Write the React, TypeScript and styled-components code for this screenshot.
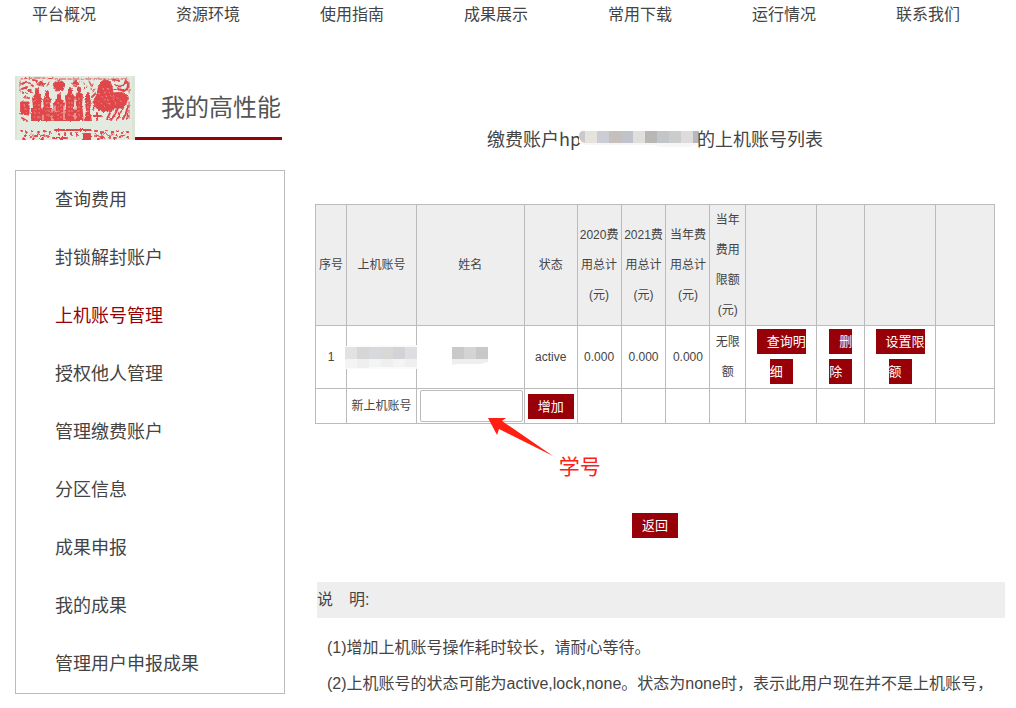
import React from "react";
import styled, { createGlobalStyle } from "styled-components";

const RED = "#970009";
const LINE = "#bbbbbb";
const SANS = '"Liberation Sans", "Noto Sans CJK SC", sans-serif';
const CJK = '"Noto Sans CJK SC", sans-serif';

const GlobalStyle = createGlobalStyle`
  * { box-sizing: border-box; }
  body {
    margin: 0;
    background: #fff;
    color: #444;
    font-family: ${SANS};
    font-size: 16px;
  }
`;

const TopNav = styled.nav`
  display: flex;
  justify-content: space-between;
  padding: 0 56px 0 32px;
  height: 30px;
  line-height: 30px;
`;

const NavLink = styled.a`
  color: #444;
  text-decoration: none;
`;

const Page = styled.div`
  display: flex;
  align-items: flex-start;
  padding: 46px 11px 0 15px;
`;

const Sidebar = styled.aside`
  flex: 0 0 270px;
  margin-right: 30px;
`;

const Brand = styled.header`
  display: flex;
  width: 267px;
  height: 64px;
  margin-bottom: 30px;
`;

const BrandTitle = styled.h1`
  flex: 1;
  margin: 0;
  border-bottom: 3px solid ${RED};
  padding-left: 26px;
  font-size: 24px;
  line-height: 64px;
  font-weight: 400;
  color: #555;
  white-space: nowrap;
`;

const Menu = styled.ul`
  margin: 0;
  padding: 0;
  list-style: none;
  border: 1px solid ${LINE};
`;

const MenuLink = styled.a<{ $active?: boolean }>`
  display: block;
  padding-left: 39px;
  font-size: 18px;
  line-height: 58px;
  text-decoration: none;
  color: ${(p) => (p.$active ? RED : "#444")};
`;

const Main = styled.main`
  flex: 1;
  min-width: 0;
`;

const Panel = styled.section`
  padding: 44px 10px 0 0;
  text-align: center;
`;

const PanelTitle = styled.h2`
  display: flex;
  justify-content: center;
  margin: 0 0 48px;
  font-family: ${CJK};
  font-size: 18px;
  line-height: 36px;
  font-weight: 400;
`;

const TitleMask = styled.svg`
  flex: none;
  align-self: center;
  margin-left: -2px;
  margin-right: -3px;
`;

const Table = styled.table`
  width: 100%;
  table-layout: fixed;
  border-collapse: collapse;
  font-size: 12px;
  line-height: 30px;
`;

const HeadCell = styled.th`
  padding: 0 2px;
  border: 1px solid ${LINE};
  background: #eee;
  font-weight: 400;
`;

const Cell = styled.td`
  padding: 1px 2px;
  border: 1px solid ${LINE};
`;

const FormCell = styled.td`
  height: 35px;
  padding: 0;
  border: 1px solid ${LINE};
  line-height: 32px;
`;

const CellMask = styled.svg`
  display: block;
  margin: 0 -4px;
`;

const NameMask = styled.svg`
  display: block;
  margin: 0 auto;
`;

const InputWrap = styled.div`
  position: relative;
  padding: 0 1px 0 3px;
`;

const AccountInput = styled.input`
  display: block;
  width: 100%;
  height: 32px;
  border: 1px solid ${LINE};
  border-radius: 2px;
  background: #fff;
  padding: 0 6px;
`;

const ActionLink = styled.a`
  padding: 5px 10px;
  background: ${RED};
  color: #fff;
  font-size: 13px;
  text-decoration: none;
`;

const Button = styled.button`
  height: 25px;
  padding: 0 10px;
  border: 0;
  background: ${RED};
  color: #fff;
  font-family: ${SANS};
  font-size: 13px;
  line-height: 25px;
  vertical-align: middle;
`;

const BackRow = styled.div`
  padding-top: 89px;
  display: flex;
  justify-content: center;
`;

/* Callout that points at the account field from below. */
const Annotation = styled.div`
  position: absolute;
  top: 28px;
  left: 70px;
  display: flex;
  color: #ff2013;
  font-size: 21px;
  line-height: 30px;
  white-space: nowrap;
  pointer-events: none;
`;

const AnnotationText = styled.span`
  margin-top: 34px;
  margin-left: 5px;
`;

const Notes = styled.section`
  margin-top: 44px;
  padding-left: 2px;
  line-height: 36px;
  overflow: hidden;
`;

const NotesTitle = styled.h3`
  margin: 0 0 12px;
  background: #eee;
  font-size: 16px;
  font-weight: 400;
  white-space: pre;
`;

const Note = styled.p`
  margin: 0;
  padding-left: 10px;
  white-space: nowrap;
`;

const navItems = ["平台概况", "资源环境", "使用指南", "成果展示", "常用下载", "运行情况", "联系我们"];

const menuItems = [
  "查询费用",
  "封锁解封账户",
  "上机账号管理",
  "授权他人管理",
  "管理缴费账户",
  "分区信息",
  "成果申报",
  "我的成果",
  "管理用户申报成果",
];

const columns = [
  { label: "序号", width: 31 },
  { label: "上机账号", width: 70 },
  { label: "姓名", width: 108 },
  { label: "状态", width: 53 },
  { label: "2020费用总计(元)", width: 44 },
  { label: "2021费用总计(元)", width: 45 },
  { label: "当年费用总计(元)", width: 44 },
  { label: "当年费用限额(元)", width: 36 },
  { label: "", width: 71 },
  { label: "", width: 48 },
  { label: "", width: 71 },
  { label: "", width: 59 },
];

const titleBlocks: [number, number, string][] = [
  [0, 6, "#cbc9ca"],
  [6, 12, "#e6e2dd"],
  [18, 12, "#cacdd3"],
  [30, 12, "#c5c0bc"],
  [42, 12, "#c0c3c9"],
  [54, 12, "#e0dfdc"],
  [66, 12, "#b9b7b5"],
  [78, 12, "#c3c6c9"],
  [90, 12, "#cbcccc"],
  [102, 12, "#dddcdb"],
  [114, 6, "#b5b8bc"],
];

const accountBlocks = ["#e3e1e2", "#d5d7d6", "#d8d9dc", "#d8d8d6", "#d4d2d6", "#dcdee0"];
const nameBlocks = ["#c7c9ca", "#d4d4d4", "#c6c8c9"];

/* Robed figures of the procession: centre, top of the head, half width of the robe. */
const figures = [
  [22, 14, 6],
  [32, 16, 5],
  [44, 19, 7],
  [55, 13, 6],
  [64, 12, 5],
  [73, 18, 4],
];

/* Red stone rubbing: a procession of figures, a horse and a second frieze. */
function Rubbing() {
  return (
    <svg width="120" height="64" viewBox="0 0 120 64" aria-hidden="true">
      <defs>
        <filter id="carved" x="0" y="0" width="120" height="64" filterUnits="userSpaceOnUse">
          <feTurbulence type="fractalNoise" baseFrequency="0.4" numOctaves="2" seed="4" result="noise" />
          <feDisplacementMap in="SourceGraphic" in2="noise" scale="3" xChannelSelector="R" yChannelSelector="G" />
        </filter>
      </defs>
      <rect width="120" height="64" fill="#dbe5d5" />
      <rect x="2" width="115" height="64" fill="#e3ebe1" />
      <g filter="url(#carved)" fill="#e0474b" stroke="#e0474b" strokeLinecap="round" strokeLinejoin="round">
        <path d="M6 3q18-2 34 0h40M80 3h33M5 5v12M114 6v12M114 26v16" fill="none" strokeWidth="1" strokeDasharray="6 2 3 2" />
        <path d="M6 26h8v13l-8-1z" />
        <path d="M7 42l5 3M9 21l5 1M7 8l4-2M7 13l5-2M14 7l4 3M13 14l4 2M18 4l4 1M8 17h3" fill="none" strokeWidth="2" />
        <path d="M22 8l4-3 4 3-4 2zM38 8q6-7 12 0l-2 6-7 1zM57 7l4-3 3 4-4 2zM67 6l4 3M74 5l2 5M78 8l-2 5M69 13l2-2M34 6l-2 4M80 13l-2 3" strokeWidth="1" />
        {figures.map(([x, y, w]) => (
          <path
            key={x}
            stroke="none"
            d={`M${x - 2} ${y}q2-4 4 0v4L${x + w - 1} ${y + 8}L${x + w - 2} ${y + 17}L${x + w} 45H${x - w}L${x - w + 2} ${y + 17}L${x - w + 1} ${y + 8}L${x - 2} ${y + 4}z`}
          />
        ))}
        <path d="M16 32h22v11H16zM38 34h25v9H38z" stroke="none" />
        <path d="M83 13q0-8 8-9 5 1 6 7l1 6q7-1 11 0 4 3 3 9l-4 6-10 0-6 4-9-2-4-6q-1-5 3-9z" />
        <path d="M98 31l-3 6-3 6M103 32l-3 6-4 6M109 30l-4 7-3 7M113 30l-2 7-3 6M80 18l-3 3M80 30l-2 3M113 38l-1 5" fill="none" strokeWidth="2" />
        <path d="M98 4q4-1 6 1M101 9q4 3 7 0t3-5M112 6q3 6-3 9l-6-2M99 13l2 0M112 19l1 4" fill="none" strokeWidth="2" />
        <path d="M82 37v7M79 40h7" fill="none" strokeWidth="2" />
        <path d="M40 54h36M44 58v1M50 57v2M56 57v2M62 57v2M38 62h14M69 58h6v6h-6z" strokeWidth="2" />
        <path d="M6 55h1M11 56l1 1M17 55l1 1M23 56h1M29 55l2 1M34 57l1-1M9 60h2M15 60l1 1M20 60h2M27 60l2-1M8 63h2M18 63h1M25 63h3M33 61h1M80 55h2M86 57l2-1M91 55h1M96 57l2-1M102 55h1M107 57l1-1M112 56h1M80 60h1M86 62h3M94 61l1 1M99 62h2M105 61l2-1M112 61h1M83 63h1" fill="none" strokeWidth="2" />
        <path d="M16 58l4 3 4-3 4 3 5-2M80 58l5 3 5-4 4 3 5-2 5 3 6-2" fill="none" strokeWidth="1" />
      </g>
      <g filter="url(#carved)" fill="none" stroke="#efd9d2" strokeLinecap="round">
        <path d="M27 24v9M28 39v5M37 27v9M37 40v4M49 30v13M60 24v8M60 38v5M69 27v17M40 30v6" strokeWidth="1" />
      </g>
      <g filter="url(#carved)" fill="none" stroke="#ec8a88" strokeWidth="1" strokeDasharray="2 2">
        <path d="M20 24v18M24 28v14M32 22v20M34 26v16M43 26v17M46 28v14M54 22v20M57 26v16M64 22v20M73 26v16M84 17l9 11M88 12l7 17M92 12l9 16M83 24l7 7M98 20l9 6M9 28l2 9" />
      </g>
    </svg>
  );
}

export default function App() {
  return (
    <>
      <GlobalStyle />
      <TopNav>
        {navItems.map((item) => (
          <NavLink href="#" key={item}>{item}</NavLink>
        ))}
      </TopNav>
      <Page>
        <Sidebar>
          <Brand>
            <Rubbing />
            <BrandTitle>我的高性能</BrandTitle>
          </Brand>
          <Menu>
            {menuItems.map((item) => (
              <li key={item}>
                <MenuLink href="#" $active={item === "上机账号管理"}>{item}</MenuLink>
              </li>
            ))}
          </Menu>
        </Sidebar>
        <Main>
          <Panel>
            <PanelTitle>
              <span>缴费账户hp</span>
              <TitleMask width="121" height="20" viewBox="0 0 121 20" aria-hidden="true">
                <path d="M0 3h120v11q-4 5-14 5H88q-8 0-14-2H10q-8 0-10-6z" fill="#f6f6f6" />
                {titleBlocks.map(([x, w, fill]) => (
                  <rect key={x} x={x} y="3" width={w} height="12" fill={fill} />
                ))}
                <path d="M0 3h3q-3 1-3 5zM0 9q1 5 6 6H0z" fill="#fff" />
              </TitleMask>
              <span>的上机账号列表</span>
            </PanelTitle>
            <Table>
              <colgroup>
                {columns.map((c, i) => (
                  <col key={i} style={{ width: `${(c.width / 680) * 100}%` }} />
                ))}
              </colgroup>
              <thead>
                <tr>
                  {columns.map((c, i) => (
                    <HeadCell key={i} scope="col">{c.label}</HeadCell>
                  ))}
                </tr>
              </thead>
              <tbody>
                <tr>
                  <Cell>1</Cell>
                  <Cell>
                    <CellMask width="72" height="24" viewBox="0 0 72 24" aria-hidden="true">
                      <path d="M0 1h12l48-1h12v24H0z" fill="#fafafa" />
                      {accountBlocks.map((fill, i) => (
                        <g key={i}>
                          <rect x={i * 12} y="2" width="12" height="12" fill={fill} />
                          <rect x={i * 12} y="14" width="12" height={i < 2 ? 9 : 8} fill={i % 2 ? "#efefef" : "#f4f4f4"} />
                        </g>
                      ))}
                    </CellMask>
                  </Cell>
                  <Cell>
                    <NameMask width="36" height="24" viewBox="0 0 36 24" aria-hidden="true">
                      <path d="M0 14h36v3l-8 2H5l-5 1z" fill="#eeeeee" />
                      {nameBlocks.map((fill, i) => (
                        <rect key={i} x={i * 12} y="2" width="12" height="12" fill={fill} />
                      ))}
                    </NameMask>
                  </Cell>
                  <Cell>active</Cell>
                  <Cell>0.000</Cell>
                  <Cell>0.000</Cell>
                  <Cell>0.000</Cell>
                  <Cell>无限额</Cell>
                  <Cell><ActionLink href="#">查询明细</ActionLink></Cell>
                  <Cell><ActionLink href="#">删除</ActionLink></Cell>
                  <Cell><ActionLink href="#">设置限额</ActionLink></Cell>
                  <Cell />
                </tr>
                <tr>
                  <FormCell />
                  <FormCell><label htmlFor="account">新上机账号</label></FormCell>
                  <FormCell>
                    <InputWrap>
                      <AccountInput id="account" type="text" />
                      <Annotation>
                        <svg width="67" height="40" viewBox="0 0 67 40" aria-hidden="true">
                          <path d="M1 0L19 0 15 3 66 38 12 11 10 17z" fill="#ff2013" />
                        </svg>
                        <AnnotationText>学号</AnnotationText>
                      </Annotation>
                    </InputWrap>
                  </FormCell>
                  <FormCell><Button type="button">增加</Button></FormCell>
                  {columns.slice(4).map((_, i) => (
                    <FormCell key={i} />
                  ))}
                </tr>
              </tbody>
            </Table>
            <BackRow><Button type="button">返回</Button></BackRow>
          </Panel>
          <Notes>
            <NotesTitle>说　明:</NotesTitle>
            <Note>(1)增加上机账号操作耗时较长，请耐心等待。</Note>
            <Note>(2)上机账号的状态可能为active,lock,none。状态为none时，表示此用户现在并不是上机账号，</Note>
          </Notes>
        </Main>
      </Page>
    </>
  );
}
